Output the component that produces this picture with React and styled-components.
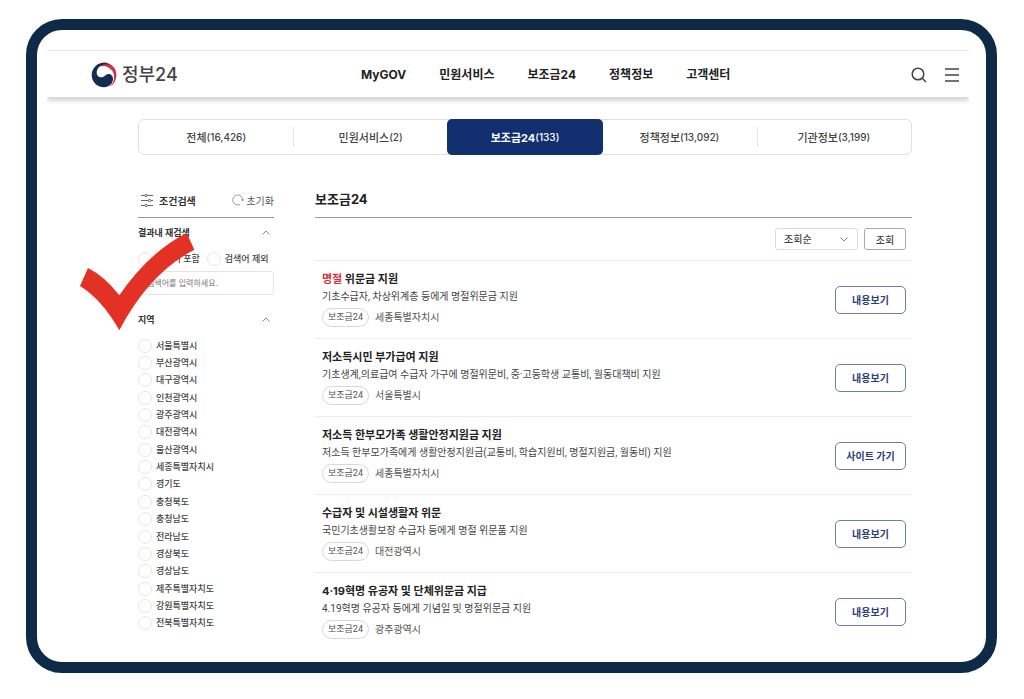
import styled, { createGlobalStyle, css } from 'styled-components'

const tabs = [
	{ name: '전체', count: '16,426' },
	{ name: '민원서비스', count: '2' },
	{ name: '보조금24', count: '133', active: true },
	{ name: '정책정보', count: '13,092' },
	{ name: '기관정보', count: '3,199' },
]

const menu = ['MyGOV', '민원서비스', '보조금24', '정책정보', '고객센터']

const regions = [
	'서울특별시',
	'부산광역시',
	'대구광역시',
	'인천광역시',
	'광주광역시',
	'대전광역시',
	'울산광역시',
	'세종특별자치시',
	'경기도',
	'충청북도',
	'충청남도',
	'전라남도',
	'경상북도',
	'경상남도',
	'제주특별자치도',
	'강원특별자치도',
	'전북특별자치도',
]

const results = [
	{
		mark: '명절',
		title: ' 위문금 지원',
		desc: '기초수급자, 차상위계층 등에게 명절위문금 지원',
		region: '세종특별자치시',
		action: '내용보기',
	},
	{
		title: '저소득시민 부가급여 지원',
		desc: '기초생계,의료급여 수급자 가구에 명절위문비, 중·고등학생 교통비, 월동대책비 지원',
		region: '서울특별시',
		action: '내용보기',
	},
	{
		title: '저소득 한부모가족 생활안정지원금 지원',
		desc: '저소득 한부모가족에게 생활안정지원금(교통비, 학습지원비, 명절지원금, 월동비) 지원',
		region: '세종특별자치시',
		action: '사이트 가기',
	},
	{
		title: '수급자 및 시설생활자 위문',
		desc: '국민기초생활보장 수급자 등에게 명절 위문품 지원',
		region: '대전광역시',
		action: '내용보기',
	},
	{
		title: '4·19혁명 유공자 및 단체위문금 지급',
		desc: '4.19혁명 유공자 등에게 기념일 및 명절위문금 지원',
		region: '광주광역시',
		action: '내용보기',
	},
]

const LogoMark = () => (
	<svg width="26" height="26" viewBox="0 0 26 26" aria-hidden="true">
		<path d="M4 5.2A12 12 0 0 1 25.4 13.5C25.2 18.5 22.5 22.8 18.6 24.8C23.4 20.6 24.6 13.6 21 8.6C17 3 8.6 2.3 4 7.5Z" fill="#cf3346" />
		<path
			d="M13 .8C6.2 .8 .7 6.4 .7 13C.7 19.8 6.2 25.2 13 25.2C18.3 25.2 21.8 21.5 22 17.2C22.2 13.8 19.8 11.8 17.2 12C14.8 12.2 13.7 14.6 11.4 15.2C8.5 15.9 5.6 14 5.7 10.6C5.8 6.4 8.8 3 13.2 2.4C15.6 2.1 17.8 2.4 19.4 3.2C17.6 1.7 15.4 .8 13 .8Z"
			fill="#142b52"
		/>
	</svg>
)

const SearchIcon = () => (
	<svg width="16" height="16" viewBox="0 0 16 16" fill="none" stroke="#444" strokeWidth="1.5" aria-hidden="true">
		<circle cx="7" cy="7" r="5.8" />
		<path d="M11.2 11.2L15 15" />
	</svg>
)

const MenuIcon = () => (
	<svg width="16" height="16" viewBox="0 0 16 16" stroke="#444" strokeWidth="1.5" aria-hidden="true">
		<path d="M1 2H15M1 8H15M1 14H15" />
	</svg>
)

const FilterIcon = () => (
	<svg width="14" height="14" viewBox="0 0 14 14" fill="#fff" stroke="#666" aria-hidden="true">
		<path d="M1 2.5H13M1 7.5H13M1 12.5H13" />
		<circle cx="6" cy="2.5" r="1.2" />
		<circle cx="9.5" cy="7.5" r="1.2" />
		<circle cx="6" cy="12.5" r="1.2" />
	</svg>
)

const ResetIcon = () => (
	<svg width="12" height="12" viewBox="0 0 12 12" fill="none" stroke="#999" aria-hidden="true">
		<path d="M8.2 10.3A5 5 0 1 1 10.7 6.5" />
		<path d="M8.9 5.4L10.6 7L12 5.2" />
	</svg>
)

const Chevron = ({ up }) => (
	<svg width="8" height="5" viewBox="0 0 8 5" fill="none" stroke="#888" aria-hidden="true">
		<path d={up ? 'M.5 4.5L4 1L7.5 4.5' : 'M.5 .5L4 4L7.5 .5'} />
	</svg>
)

export default () => (
	<Page>
		<GlobalStyle />
		<Frame>
			<Header>
				<Logo href="#">
					<LogoMark />
					정부24
				</Logo>
				<Nav>
					{menu.map((item) => (
						<NavLink key={item} href="#">
							{item}
						</NavLink>
					))}
				</Nav>
				<IconButton aria-label="검색">
					<SearchIcon />
				</IconButton>
				<IconButton aria-label="전체메뉴">
					<MenuIcon />
				</IconButton>
			</Header>

			<Body>
				<Tabs>
					{tabs.map(({ name, count, active }) => (
						<Tab key={name} $active={active}>
							{name}
							<Count>({count})</Count>
						</Tab>
					))}
				</Tabs>

				<Columns>
					<Sidebar>
						<SidebarHead>
							<FilterIcon />
							<SidebarTitle>조건검색</SidebarTitle>
							<ResetButton>
								<ResetIcon />
								초기화
							</ResetButton>
						</SidebarHead>

						<GroupToggle>
							결과내 재검색
							<Chevron up />
						</GroupToggle>
						<WordOptions>
							<RadioLabel>
								<Radio name="word" />
								검색어 포함
							</RadioLabel>
							<RadioLabel>
								<Radio name="word" />
								검색어 제외
							</RadioLabel>
						</WordOptions>
						<WordInput aria-label="검색어" placeholder="검색어를 입력하세요." />

						<GroupToggle>
							지역
							<Chevron up />
						</GroupToggle>
						<RegionList>
							{regions.map((region) => (
								<RadioLabel key={region}>
									<Radio name="region" />
									{region}
								</RadioLabel>
							))}
						</RegionList>

						<CheckMark viewBox="30 158 345 294" aria-hidden="true">
							<path d="M54 263Q104 288 148 345Q236 216 350 158L373 208Q236 280 148 450Q96 358 30 317Z" fill="#e33225" />
						</CheckMark>
					</Sidebar>

					<Main>
						<Heading>보조금24</Heading>
						<Toolbar>
							<SelectBox>
								<Select aria-label="정렬">
									<option>조회순</option>
								</Select>
								<Chevron />
							</SelectBox>
							<SortButton>조회</SortButton>
						</Toolbar>
						<Results>
							{results.map(({ mark, title, desc, region, action }) => (
								<Result key={title}>
									<Summary>
										<Title>
											{mark && <Mark>{mark}</Mark>}
											{title}
										</Title>
										<Desc>{desc}</Desc>
										<Meta>
											<Badge>보조금24</Badge>
											{region}
										</Meta>
									</Summary>
									<ActionButton>{action}</ActionButton>
								</Result>
							))}
						</Results>
					</Main>
				</Columns>
			</Body>
		</Frame>
	</Page>
)

const GlobalStyle = createGlobalStyle`
	* {
		box-sizing: border-box;
	}

	body {
		margin: 0;
		background: #fff;
		color: #444;
		font-family: Inter, 'Noto Sans CJK KR', sans-serif;
		font-size: 10px;
	}

	button, input, select {
		font: inherit;
		color: inherit;
	}

	button {
		padding: 0;
		border: 0;
		background: none;
		cursor: pointer;
	}

	a {
		color: inherit;
		text-decoration: none;
	}
`

const Page = styled.div`
	display: flex;
	min-height: 100vh;
	padding: 19px 27px 26px 26px;
`

const Frame = styled.div`
	flex: 1;
	padding: 20px 0 11px;
	border: 11px solid #0f2a47;
	border-radius: 36px;
`

const Header = styled.header`
	display: flex;
	align-items: center;
	height: 47px;
	margin: 0 17px 0 10px;
	padding: 1px 9px 0 44px;
	border-top: 1px solid #e8e8e8;
	box-shadow: 0 4px 4px rgba(0, 0, 0, 0.16);
	clip-path: inset(0 0 -10px 0);
`

const Logo = styled.a`
	display: flex;
	align-items: center;
	gap: 5px;
	width: 270px;
	color: #444;
	font-size: 18px;
	font-weight: 500;
	line-height: 26px;
`

const Nav = styled.nav`
	display: flex;
	flex: 1;
	gap: 33px;
`

const NavLink = styled.a`
	color: #222;
	font-size: 12px;
	font-weight: 700;
	line-height: 18px;
	white-space: nowrap;
`

const IconButton = styled.button`
	display: flex;
	margin-left: 17px;
`

const Body = styled.div`
	padding: 22px 74px 0 101px;
`

const Tabs = styled.div`
	display: flex;
	height: 36px;
	border: 1px solid #e0e0e0;
	border-radius: 6px;
`

const Tab = styled.button`
	display: flex;
	flex: 1;
	align-items: center;
	justify-content: center;
	font-size: 11px;
	font-weight: 500;

	& + & {
		background: linear-gradient(#e4e4e4, #e4e4e4) left center / 1px 20px no-repeat;
	}

	${({ $active }) =>
		$active &&
		css`
			&& {
				margin: -1px;
				padding: 0 1px;
				border-radius: 5px;
				background: #122f70;
				color: #fff;
				font-weight: 700;
			}

			&& + button {
				background: none;
			}
		`}
`

const Count = styled.span`
	font-size: 10px;
	font-weight: 500;
`

const Columns = styled.div`
	display: flex;
	gap: 41px;
	margin-top: 28px;
`

const Sidebar = styled.aside`
	position: relative;
	display: flex;
	flex: none;
	flex-direction: column;
	width: 136px;
`

const SidebarHead = styled.div`
	display: flex;
	align-items: center;
	height: 35px;
	padding-left: 2px;
	border-bottom: 1px solid #999;
`

const SidebarTitle = styled.h2`
	flex: 1;
	margin: 0 0 0 5px;
	color: #333;
	font-size: 10px;
	font-weight: 700;
`

const ResetButton = styled.button`
	display: flex;
	align-items: center;
	gap: 2px;
	color: #555;
`

const GroupToggle = styled.button`
	display: flex;
	align-items: center;
	justify-content: space-between;
	height: 28px;
	padding-right: 4px;
	color: #333;
	font-size: 9px;
	font-weight: 700;
`

const WordOptions = styled.div`
	display: flex;
	gap: 7px;
	height: 25px;
`

const RadioLabel = styled.label`
	display: flex;
	align-items: center;
	gap: 4px;
	font-size: 9px;
	font-weight: 500;
	line-height: 14px;
	white-space: nowrap;
`

const Radio = styled.input.attrs({ type: 'radio' })`
	appearance: none;
	width: 14px;
	height: 14px;
	margin: 0;
	border: 1px solid #e6e6e6;
	border-radius: 50%;

	&:checked {
		border: 4px solid #122f70;
	}
`

const WordInput = styled.input`
	height: 24px;
	margin-bottom: 10px;
	padding: 0 8px;
	border: 1px solid #e4e4e4;
	border-radius: 3px;
	font-size: 8px;

	&::placeholder {
		color: #777;
		opacity: 1;
	}
`

const RegionList = styled.div`
	display: grid;
	flex: 1;
	grid-auto-rows: 1fr;
	margin-top: 4px;
	margin-bottom: 18px;
`

const CheckMark = styled.svg`
	position: absolute;
	top: 50px;
	left: -58px;
	width: 115px;
	height: 98px;
	pointer-events: none;
`

const Main = styled.main`
	flex: 1;
`

const Heading = styled.h1`
	height: 35px;
	margin: 0;
	border-bottom: 1px solid #999;
	color: #222;
	font-size: 13px;
	font-weight: 700;
	line-height: 32px;
`

const Toolbar = styled.div`
	display: flex;
	justify-content: flex-end;
	gap: 6px;
	padding: 10px 6px;
`

const SelectBox = styled.div`
	display: grid;
	align-items: center;
	width: 83px;

	& > * {
		grid-area: 1 / 1;
	}

	& > svg {
		justify-self: end;
		margin-right: 10px;
		pointer-events: none;
	}
`

const Select = styled.select`
	appearance: none;
	height: 22px;
	padding: 0 8px;
	border: 1px solid #dcdcdc;
	border-radius: 3px;
	background: #fff;
	font-weight: 500;
`

const SortButton = styled.button`
	width: 42px;
	height: 22px;
	border: 1px solid #aaa;
	border-radius: 3px;
	font-weight: 500;
`

const Results = styled.ul`
	margin: 0;
	padding: 0;
	list-style: none;
`

const Result = styled.li`
	display: flex;
	align-items: center;
	justify-content: space-between;
	height: 78px;
	padding: 0 6px 0 7px;
	border-top: 1px solid #ececec;
`

const Summary = styled.div`
	padding-bottom: 2px;
`

const Title = styled.h3`
	margin: 0;
	color: #222;
	font-size: 11px;
	font-weight: 700;
	line-height: 17px;
`

const Mark = styled.span`
	color: #d8313a;
`

const Desc = styled.p`
	margin: 0 0 2px;
	color: #444;
	font-family: Roboto, 'Noto Sans CJK KR', sans-serif;
	line-height: 18px;
`

const Meta = styled.div`
	display: flex;
	align-items: center;
	gap: 6px;
	color: #555;
	font-family: Roboto, 'Noto Sans CJK KR', sans-serif;
	line-height: 17px;
`

const Badge = styled.span`
	width: 47px;
	height: 19px;
	border: 1px solid #d8d8d8;
	border-radius: 10px;
	font-size: 9px;
	text-align: center;
`

const ActionButton = styled.button`
	width: 71px;
	height: 28px;
	border: 1px solid #6b7dac;
	border-radius: 5px;
	color: #2b3e7d;
	font-weight: 700;
`
